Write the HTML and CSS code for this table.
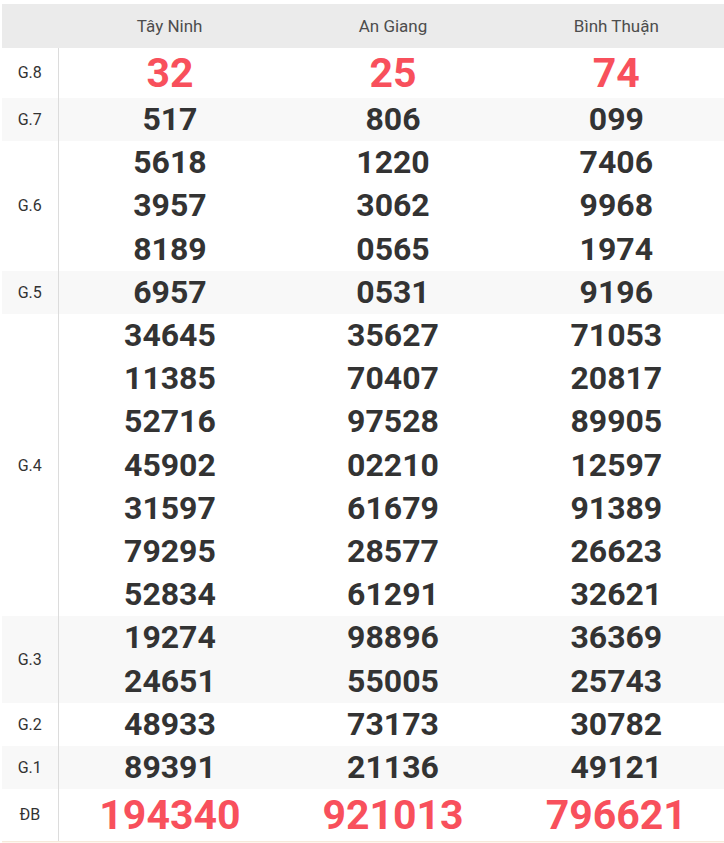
FILE: index.html
```html
<!DOCTYPE html>
<html>
<head>
<meta charset="utf-8">
<link rel="stylesheet" href="styles.css">
</head>
<body>
<div class="page">
<table class="kq">
<thead>
<tr><th class="lbl"></th><th>Tây Ninh</th><th>An Giang</th><th>Bình Thuận</th></tr>
</thead>
<tbody>
<tr class="big"><td class="lbl">G.8</td><td><div>32</div></td><td><div>25</div></td><td><div>74</div></td></tr>
<tr class="alt"><td class="lbl">G.7</td><td><div>517</div></td><td><div>806</div></td><td><div>099</div></td></tr>
<tr><td class="lbl">G.6</td><td><div>5618</div><div>3957</div><div>8189</div></td><td><div>1220</div><div>3062</div><div>0565</div></td><td><div>7406</div><div>9968</div><div>1974</div></td></tr>
<tr class="alt"><td class="lbl">G.5</td><td><div>6957</div></td><td><div>0531</div></td><td><div>9196</div></td></tr>
<tr><td class="lbl">G.4</td>
<td><div>34645</div><div>11385</div><div>52716</div><div>45902</div><div>31597</div><div>79295</div><div>52834</div></td>
<td><div>35627</div><div>70407</div><div>97528</div><div>02210</div><div>61679</div><div>28577</div><div>61291</div></td>
<td><div>71053</div><div>20817</div><div>89905</div><div>12597</div><div>91389</div><div>26623</div><div>32621</div></td></tr>
<tr class="alt"><td class="lbl">G.3</td><td><div>19274</div><div>24651</div></td><td><div>98896</div><div>55005</div></td><td><div>36369</div><div>25743</div></td></tr>
<tr><td class="lbl">G.2</td><td><div>48933</div></td><td><div>73173</div></td><td><div>30782</div></td></tr>
<tr class="alt"><td class="lbl">G.1</td><td><div>89391</div></td><td><div>21136</div></td><td><div>49121</div></td></tr>
<tr class="big db"><td class="lbl">ĐB</td><td><div>194340</div></td><td><div>921013</div></td><td><div>796621</div></td></tr>
</tbody>
</table>
<div class="foot"></div>
</div>
</body>
</html>
```
FILE: styles.css
```css
html, body {
  margin: 0;
  padding: 0;
  background: #fff;
  overflow: hidden;
}
.page {
  padding: 4px 0 0 2px;
  font-family: Roboto, "Liberation Sans", sans-serif;
  overflow: hidden;
}
.kq {
  width: 726px;
  border-collapse: collapse;
  table-layout: fixed;
}
.kq th {
  background: #ebebeb;
  height: 44px;
  padding: 0;
  font-weight: 400;
  font-size: 17px;
  color: #4d4d4d;
  text-align: center;
}
.kq th.lbl, .kq td.lbl {
  width: 56px;
}
.kq td {
  padding: 0;
  text-align: center;
  vertical-align: middle;
  font-weight: 700;
  font-size: 32px;
  line-height: 43.2px;
  color: #333;
}
.kq td.lbl {
  font-weight: 400;
  font-size: 16px;
  color: #333;
  border-right: 1px solid #dcdcdc;
}
.kq tr.alt td {
  background: #f8f8f8;
}
.kq tr.big td {
  color: #f8505c;
  font-size: 41px;
  line-height: 50px;
}
.kq tr.db td {
  line-height: 52px;
}
.kq tr.big td.lbl {
  color: #333;
  font-size: 16px;
}
.foot {
  height: 5px;
  margin-top: 0;
  background: #fdf6ee;
  border-top: 1px solid #f6e9da;
}
```
